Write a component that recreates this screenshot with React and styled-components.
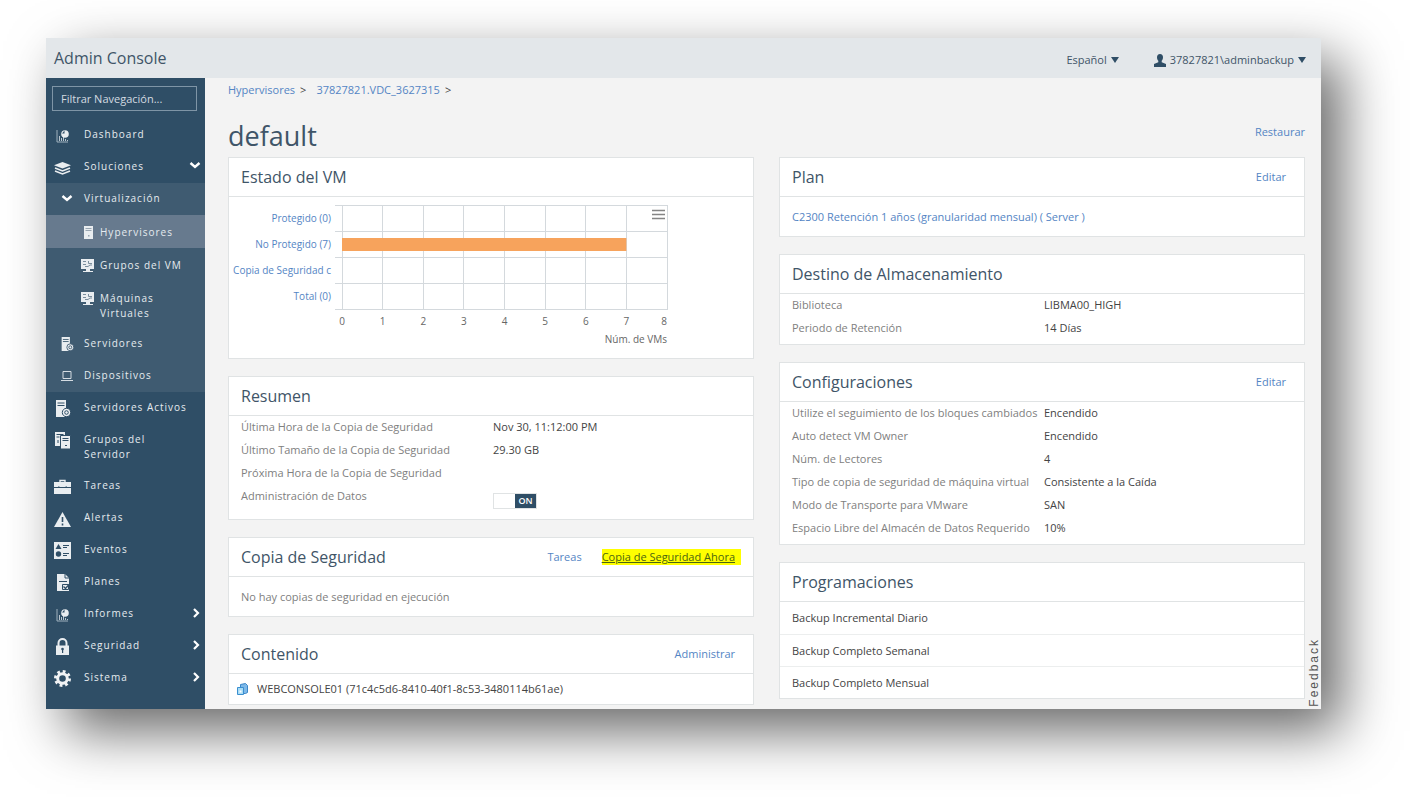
import React, { useState } from 'react';
import styled, { createGlobalStyle, css } from 'styled-components';

const color = {
	navy: '#2f4e66',
	navyLight: '#3f5b71',
	navyActive: '#677a8e',
	heading: '#3f5568',
	link: '#5485c4',
	label: '#808080',
	value: '#444',
	line: '#e0e3e4',
	page: '#f3f3f3',
	bar: '#f7a35c',
};

const GlobalStyle = createGlobalStyle`
	*, *::before, *::after {
		box-sizing: border-box;
	}
	body {
		margin: 0;
		background: #fff;
		color: ${color.value};
		font-family: 'Open Sans', 'Noto Sans', sans-serif;
		font-size: 11px;
		line-height: 16px;
	}
	a {
		color: ${color.link};
		text-decoration: none;
	}
	ul {
		list-style: none;
		margin: 0;
		padding: 0;
	}
`;

const Page = styled.div`
	padding: 38px 89px 88px 46px;
`;

const Shell = styled.div`
	position: relative;
	background: ${color.page};
	box-shadow: 20px 22px 52px rgba(0, 0, 0, 0.6);
`;

const TopBar = styled.header`
	display: flex;
	align-items: center;
	height: 40px;
	padding: 0 15px 0 8px;
	background: #e3e7ea;
`;

const Brand = styled.div`
	margin-right: auto;
	color: ${color.heading};
	font-size: 16px;
	line-height: 20px;
`;

const MenuButton = styled.button`
	display: flex;
	align-items: center;
	gap: 4px;
	margin: 4px 0 0 35px;
	padding: 0;
	border: none;
	background: none;
	color: ${color.heading};
	font: inherit;
`;

const Caret = styled.span`
	border: 4px solid transparent;
	border-top: 6px solid ${color.navy};
	border-bottom: none;
`;

const Columns = styled.div`
	display: flex;
`;

const Sidebar = styled.nav`
	flex: 0 0 159px;
	padding: 8px 0 13px;
	background: ${color.navy};
`;

const Filter = styled.input`
	display: block;
	width: 145px;
	height: 25px;
	margin: 0 6px 8px;
	padding: 0 8px;
	border: 1px solid #7f95a6;
	background: transparent;
	color: #fff;
	font: inherit;

	&::placeholder {
		color: #d3dbe1;
		opacity: 1;
	}
`;

const SubMenu = styled.ul`
	background: ${color.navyLight};
`;

const levels = {
	1: css`
		padding-left: 8px;
		gap: 13px;
	`,
	2: css`
		padding-left: 12px;
		gap: 9px;
	`,
	3: css`
		padding-top: 10px;
		padding-bottom: 7px;
		padding-left: 33px;
		gap: 4px;
	`,
};

const NavLink = styled.a`
	position: relative;
	display: flex;
	align-items: start;
	padding: 8px 18px 8px 0;
	background: ${(p) => (p.$active ? color.navyActive : 'transparent')};
	color: #e6ebef;
	font-size: 10px;
	line-height: 15px;
	letter-spacing: 1px;
	${(p) => levels[p.$level]}
`;

const NavIcon = styled.span`
	display: flex;
	flex: 0 0 17px;
	align-items: center;
	justify-content: center;
	height: 16px;
`;

const NavArrow = styled.span`
	position: absolute;
	right: 4px;
	top: 7px;
	display: flex;
	align-items: center;
	height: 16px;
`;

const Main = styled.main`
	flex: 1;
	min-width: 0;
	padding: 0 16px 4px 23px;
`;

const Crumbs = styled.div`
	display: flex;
	gap: 5px;
	height: 24px;
	padding-top: 4px;
`;

const Crumb = styled.span`
	margin-right: 5px;
`;

const TitleRow = styled.div`
	display: flex;
	align-items: center;
	justify-content: space-between;
	height: 55px;
	padding-top: 12px;
`;

const Title = styled.h1`
	margin: 0;
	color: ${color.heading};
	font-size: 27px;
	font-weight: 400;
	line-height: 36px;
`;

const TitleLink = styled.a`
	padding-bottom: 8px;
`;

const Grid = styled.div`
	display: grid;
	grid-template-columns: 1fr 1fr;
	gap: 25px;
`;

const Stack = styled.div`
	display: flex;
	flex-direction: column;
	gap: 17px;
	min-width: 0;
`;

const Card = styled.section`
	border: 1px solid ${color.line};
	background: #fff;
`;

const CardHead = styled.div`
	display: flex;
	align-items: center;
	gap: 20px;
	height: 39px;
	padding: 0 18px 0 12px;
	border-bottom: 1px solid ${color.line};
`;

const CardTitle = styled.h2`
	margin: 0 auto 0 0;
	color: ${color.heading};
	font-size: 16px;
	font-weight: 400;
	line-height: 20px;
`;

const Marked = styled.a`
	margin-right: -6px;
	padding-right: 6px;
	background: #ffff00;
	color: #4b6510;
	text-decoration: underline;
`;

const Note = styled.div`
	padding: 12px 12px 11px;
	color: ${color.label};
`;

const Pairs = styled.dl`
	margin: 0;
	padding: 0 8px 4px 12px;
`;

const Pair = styled.div`
	display: grid;
	grid-template-columns: 1fr 1fr;
	min-height: 23px;
	padding-top: 3px;
	white-space: nowrap;

	dt {
		color: ${color.label};
	}
	dd {
		margin: 0;
	}
`;

const Entry = styled.li`
	display: flex;
	align-items: center;
	gap: 9px;
	height: ${(p) => (p.$icon ? '30px' : '32px')};
	padding: 0 ${(p) => (p.$icon ? '8px' : '12px')};

	& + & {
		border-top: 1px solid #eceeee;
	}
`;

const Switch = styled.label`
	display: grid;
	grid-template-columns: 1fr 1fr;
	width: 44px;
	height: 16px;
	margin: 5px 0 6px;
	border: 1px solid ${color.line};
	color: #fff;
	font-size: 9px;
	font-weight: 600;
	line-height: 14px;
	text-align: center;

	input {
		appearance: none;
		margin: 0;
		background: #fff;
	}
	span {
		background: ${color.navy};
	}
`;

const ChartBox = styled.svg`
	display: block;
	font-size: 10px;
`;

const Feedback = styled.button`
	position: absolute;
	right: 0;
	bottom: 2px;
	padding: 0;
	border: none;
	background: none;
	color: #555;
	font: 12px/14px 'Liberation Sans', sans-serif;
	letter-spacing: 2px;
	writing-mode: vertical-rl;
	transform: rotate(180deg);
`;

const Svg = ({ size = 17, box = 17, children }) => (
	<svg width={size} height={size} viewBox={`0 0 ${box} ${box}`} fill="#e9edf0" aria-hidden="true">
		{children}
	</svg>
);

const dark = color.navy;

const serverGear = (
	<>
		<path d="M2 0h10v17H2z" />
		<path d="M3.500 3h7M3.500 5.500h7" stroke={dark} />
		<circle cx="12.500" cy="12.500" r="4.200" stroke={dark} />
		<circle cx="12.500" cy="12.500" r="1.800" fill="none" stroke={dark} />
	</>
);

const icons = {
	report: (
		<Svg>
			<path d="M3 3v12h11" fill="none" stroke="#9fb0bd" />
			<path d="M5 9h1v5H5zM7 11h1v3H7zM9 10h1v4H9zM11 12h1v2h-1zM13 13h1v1h-1z" fill="#b9c5ce" />
			<circle cx="11" cy="7" r="3.800" />
			<path d="M10.500 6.500V3.500L8 6.500z" fill={dark} />
		</Svg>
	),
	layers: (
		<Svg>
			<path d="M8.500 3L17 6.300 8.500 9.600 0 6.300z" />
			<path d="M1 9l7.500 3L16 9M1 12l7.500 3 7.500-3" fill="none" stroke="#e9edf0" strokeWidth="1.600" />
		</Svg>
	),
	down: (
		<Svg size={12} box={12}>
			<path d="M1.500 3l4.500 4 4.500-4" fill="none" stroke="#fff" strokeWidth="2.400" />
		</Svg>
	),
	right: (
		<Svg size={10} box={10}>
			<path d="M3 1l4 4-4 4" fill="none" stroke="#fff" strokeWidth="2.200" />
		</Svg>
	),
	host: (
		<Svg size={16} box={16}>
			<path d="M4 1h9v13H4z" />
			<path d="M5.500 3.500h6M5.500 5.500h6" stroke="#98a5b1" />
			<path d="M8 10h1.500v1.500H8z" fill="#98a5b1" />
		</Svg>
	),
	vm: (
		<Svg size={16} box={16}>
			<path d="M1 1h13v10H1z" />
			<path d="M3 3.500h3M8.500 3v2.500H12M3 6.500h3M5 8.500h3l2-1.500h2" fill="none" stroke="#7b8e9d" />
			<path d="M6 11h4v2H6zM3 13h10v1H3z" />
		</Svg>
	),
	serverGear: <Svg>{serverGear}</Svg>,
	serverGearSmall: <Svg size={14}>{serverGear}</Svg>,
	laptop: (
		<Svg size={14} box={14}>
			<path d="M3 2.500h8v7H3zM1 11.500h12" fill="none" stroke="#d5dce2" />
		</Svg>
	),
	servers: (
		<Svg>
			<path d="M1 0h10v14H1z" />
			<path d="M2.500 2.500h7M2.500 5h3M4 8v3" stroke={dark} />
			<path d="M6.500 3.500h10V17h-10z" stroke={dark} />
			<path d="M8.500 6.500h6M8.500 8.500h6M11 13.500h2" stroke={dark} />
		</Svg>
	),
	tasks: (
		<Svg>
			<path d="M6 4V2.500h5V4" fill="none" stroke="#e9edf0" strokeWidth="1.400" />
			<path d="M0 4h17v5H0zM0 10h17v6H0z" />
			<path d="M4 8.500h1.500V10H4zM11.500 8.500H13V10h-1.500z" fill={dark} />
		</Svg>
	),
	alert: (
		<Svg>
			<path d="M8.500 2L17 17H0z" />
			<path d="M8.500 7v5M8.500 13.500v2" stroke={dark} strokeWidth="1.600" />
		</Svg>
	),
	events: (
		<Svg>
			<path d="M0 0h17v17H0z" />
			<path d="M4.500 2L7.500 7h-6z" fill={dark} />
			<circle cx="4.500" cy="12" r="2.700" fill={dark} />
			<path d="M9 3.500h6M9 5.500h4M9 11.500h6M9 13.500h4" stroke={dark} />
		</Svg>
	),
	plan: (
		<Svg>
			<path d="M3 0h8l4 4v13H3z" />
			<path d="M11 0v4h4" fill="none" stroke={dark} />
			<path d="M5 7.500h8M8.500 10.500h6v5h-6z" fill="none" stroke={dark} />
			<path d="M9.500 12.500l2 2 3.500-4" fill="none" stroke={dark} strokeWidth="1.300" />
		</Svg>
	),
	lock: (
		<Svg>
			<path d="M4.500 8V5a4 4 0 018 0v3" fill="none" stroke="#e9edf0" strokeWidth="2" />
			<path d="M2 7.500h13V17H2z" />
			<circle cx="8.500" cy="11" r="1.300" fill={dark} />
			<path d="M8 11h1.200v4H8z" fill={dark} />
		</Svg>
	),
	gear: (
		<Svg>
			<circle cx="8.500" cy="8.500" r="4.800" fill="none" stroke="#f1f3f5" strokeWidth="3" />
			<circle cx="8.500" cy="8.500" r="7" fill="none" stroke="#f1f3f5" strokeWidth="3" strokeDasharray="2.750 2.750" />
		</Svg>
	),
};

const topItems = [
	{ icon: 'report', label: 'Dashboard' },
	{ icon: 'layers', label: 'Soluciones', arrow: 'down' },
];

const subItems = [
	{ icon: 'down', label: 'Virtualización', level: 2 },
	{ icon: 'host', label: 'Hypervisores', level: 3, active: true },
	{ icon: 'vm', label: 'Grupos del VM', level: 3 },
	{ icon: 'vm', label: 'Máquinas Virtuales', level: 3 },
	{ icon: 'serverGearSmall', label: 'Servidores', level: 2 },
	{ icon: 'laptop', label: 'Dispositivos', level: 2 },
];

const bottomItems = [
	{ icon: 'serverGear', label: 'Servidores Activos' },
	{ icon: 'servers', label: 'Grupos del Servidor' },
	{ icon: 'tasks', label: 'Tareas' },
	{ icon: 'alert', label: 'Alertas' },
	{ icon: 'events', label: 'Eventos' },
	{ icon: 'plan', label: 'Planes' },
	{ icon: 'report', label: 'Informes', arrow: 'right' },
	{ icon: 'lock', label: 'Seguridad', arrow: 'right' },
	{ icon: 'gear', label: 'Sistema', arrow: 'right' },
];

const storage = [
	['Biblioteca', 'LIBMA00_HIGH'],
	['Periodo de Retención', '14 Días'],
];

const settings = [
	['Utilize el seguimiento de los bloques cambiados', 'Encendido'],
	['Auto detect VM Owner', 'Encendido'],
	['Núm. de Lectores', '4'],
	['Tipo de copia de seguridad de máquina virtual', 'Consistente a la Caída'],
	['Modo de Transporte para VMware', 'SAN'],
	['Espacio Libre del Almacén de Datos Requerido', '10%'],
];

const schedules = ['Backup Incremental Diario', 'Backup Completo Semanal', 'Backup Completo Mensual'];

const chartRows = [
	['Protegido (0)', 0],
	['No Protegido (7)', 7],
	['Copia de Seguridad c', 0],
	['Total (0)', 0],
];

function NavItems({ items }) {
	return items.map(({ icon, label, arrow, level = 1, active }) => (
		<li key={label}>
			<NavLink href="#" $level={level} $active={active}>
				<NavIcon>{icons[icon]}</NavIcon>
				<span>{label}</span>
				{arrow && <NavArrow>{icons[arrow]}</NavArrow>}
			</NavLink>
		</li>
	));
}

function StatusChart() {
	const left = 113;
	const right = 438;
	const top = 8;
	const rowH = 26;
	const step = (right - left) / 8;
	const bottom = top + rowH * chartRows.length + 1;
	const ticks = [0, 1, 2, 3, 4, 5, 6, 7, 8];

	return (
		<ChartBox width="460" height="161" role="img" aria-label="Estado del VM">
			<g stroke="#d4d9dd" shapeRendering="crispEdges">
				{ticks.map((t) => (
					<line key={t} x1={left + t * step} x2={left + t * step} y1={top} y2={bottom} />
				))}
				{[0, 1, 2, 3, 4].map((r) => (
					<line key={r} x1={left - 7} x2={right} y1={top + r * rowH} y2={top + r * rowH} />
				))}
			</g>
			{chartRows.map(([label, value], i) => (
				<g key={label}>
					<a href="#">
						<text x="102" y={top + i * rowH + 17} textAnchor="end" fill={color.link}>{label}</text>
					</a>
					{value > 0 && (
						<rect x={left} y={top + i * rowH + 7} width={value * step} height="13" fill={color.bar} />
					)}
				</g>
			))}
			<g fill="#666">
				{ticks.map((t) => (
					<text
						key={t}
						x={left + t * step}
						y="128"
						textAnchor={t === 8 ? 'end' : 'middle'}
					>
						{t}
					</text>
				))}
				<text x={right} y="146" textAnchor="end">Núm. de VMs</text>
			</g>
			<path d="M423 13.500h13M423 17.500h13M423 21.500h13" stroke="#858585" strokeWidth="1.600" />
		</ChartBox>
	);
}

function Panel({ title, actions, children }) {
	return (
		<Card>
			<CardHead>
				<CardTitle>{title}</CardTitle>
				{actions}
			</CardHead>
			{children}
		</Card>
	);
}

function PairList({ rows, children }) {
	return (
		<Pairs>
			{rows.map(([name, value]) => (
				<Pair key={name}>
					<dt>{name}</dt>
					<dd>{value}</dd>
				</Pair>
			))}
			{children}
		</Pairs>
	);
}

export default function App() {
	const [managed, setManaged] = useState(true);

	return (
		<Page>
			<GlobalStyle />
			<Shell>
				<TopBar>
					<Brand>Admin Console</Brand>
					<MenuButton type="button">
						Español
						<Caret />
					</MenuButton>
					<MenuButton type="button">
						<svg width="12" height="13" viewBox="0 0 12 13" fill={color.navy} aria-hidden="true">
							<path d="M6 0c2 0 3 1.400 3 3.200C9 5 8.300 6 7.700 6.800v1.400L12 10v3H0v-3l4.300-1.800V6.800C3.700 6 3 5 3 3.200 3 1.400 4 0 6 0z" />
						</svg>
						37827821\adminbackup
						<Caret />
					</MenuButton>
				</TopBar>
				<Columns>
					<Sidebar>
						<Filter aria-label="Filtrar Navegación" placeholder="Filtrar Navegación..." />
						<ul>
							<NavItems items={topItems} />
							<li>
								<SubMenu>
									<NavItems items={subItems} />
								</SubMenu>
							</li>
							<NavItems items={bottomItems} />
						</ul>
					</Sidebar>
					<Main>
						<Crumbs>
							<a href="#">Hypervisores</a>
							<Crumb>&gt;</Crumb>
							<a href="#">37827821.VDC_3627315</a>
							<Crumb>&gt;</Crumb>
						</Crumbs>
						<TitleRow>
							<Title>default</Title>
							<TitleLink href="#">Restaurar</TitleLink>
						</TitleRow>
						<Grid>
							<Stack>
								<Panel title="Estado del VM">
									<StatusChart />
								</Panel>
								<Panel title="Resumen">
									<PairList
										rows={[
											['Última Hora de la Copia de Seguridad', 'Nov 30, 11:12:00 PM'],
											['Último Tamaño de la Copia de Seguridad', '29.30 GB'],
											['Próxima Hora de la Copia de Seguridad', ''],
										]}
									>
										<Pair>
											<dt id="data-management">Administración de Datos</dt>
											<dd>
												<Switch>
													<input
														type="checkbox"
														role="switch"
														aria-labelledby="data-management"
														checked={managed}
														onChange={(e) => setManaged(e.target.checked)}
													/>
													<span>{managed ? 'ON' : 'OFF'}</span>
												</Switch>
											</dd>
										</Pair>
									</PairList>
								</Panel>
								<Panel
									title="Copia de Seguridad"
									actions={
										<>
											<a href="#">Tareas</a>
											<Marked href="#">Copia de Seguridad Ahora</Marked>
										</>
									}
								>
									<Note>No hay copias de seguridad en ejecución</Note>
								</Panel>
								<Panel title="Contenido" actions={<a href="#">Administrar</a>}>
									<ul>
										<Entry $icon>
											<svg width="11" height="12" viewBox="0 0 11 12" aria-hidden="true">
												<path d="M3.500 1.500l5-1 2 2v7l-2 1h-5z" fill="#7db8e8" stroke="#3a86c8" />
												<path d="M.5 4.500h6v7h-6z" fill="#a9dcf5" stroke="#3a8fd0" />
												<path d="M2.500 7.500h2v2h-2z" fill="#fff" />
											</svg>
											WEBCONSOLE01 (71c4c5d6-8410-40f1-8c53-3480114b61ae)
										</Entry>
									</ul>
								</Panel>
							</Stack>
							<Stack>
								<Panel title="Plan" actions={<a href="#">Editar</a>}>
									<Note>
										<a href="#">C2300 Retención 1 años (granularidad mensual) ( Server )</a>
									</Note>
								</Panel>
								<Panel title="Destino de Almacenamiento">
									<PairList rows={storage} />
								</Panel>
								<Panel title="Configuraciones" actions={<a href="#">Editar</a>}>
									<PairList rows={settings} />
								</Panel>
								<Panel title="Programaciones">
									<ul>
										{schedules.map((name) => (
											<Entry key={name}>{name}</Entry>
										))}
									</ul>
								</Panel>
							</Stack>
						</Grid>
					</Main>
				</Columns>
				<Feedback type="button">Feedback</Feedback>
			</Shell>
		</Page>
	);
}
